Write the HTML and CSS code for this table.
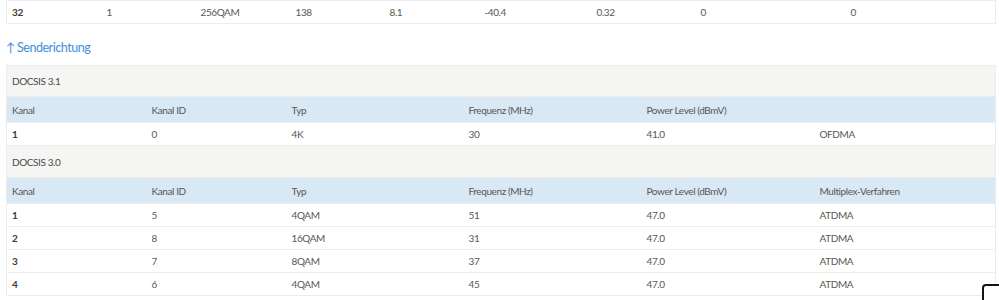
FILE: index.html
```html
<!DOCTYPE html>
<html lang="de">
<head>
<meta charset="utf-8">
<link rel="stylesheet" href="styles.css">
</head>
<body>
<div class="page">
  <table class="tbl tbl-down">
    <colgroup>
      <col class="c95"><col class="c94"><col class="c95"><col class="c94"><col class="c95"><col class="c112"><col class="c104"><col class="c150"><col class="c150">
    </colgroup>
    <tbody>
      <tr class="row">
        <td class="first">32</td><td>1</td><td>256QAM</td><td>138</td><td>8.1</td><td>-40.4</td><td>0.32</td><td>0</td><td>0</td>
      </tr>
    </tbody>
  </table>

  <h3 class="section-link"><span class="arrow">↑</span>Senderichtung</h3>

  <table class="tbl tbl-up">
    <colgroup>
      <col class="w140"><col class="w140"><col class="w177"><col class="w178"><col class="w173"><col class="w181">
    </colgroup>
    <tbody>
      <tr class="group group-first"><td colspan="6">DOCSIS 3.1</td></tr>
      <tr class="head"><td>Kanal</td><td>Kanal ID</td><td>Typ</td><td>Frequenz (MHz)</td><td>Power Level (dBmV)</td><td></td></tr>
      <tr class="row"><td class="first">1</td><td>0</td><td>4K</td><td>30</td><td>41.0</td><td>OFDMA</td></tr>
      <tr class="group"><td colspan="6">DOCSIS 3.0</td></tr>
      <tr class="head"><td>Kanal</td><td>Kanal ID</td><td>Typ</td><td>Frequenz (MHz)</td><td>Power Level (dBmV)</td><td>Multiplex-Verfahren</td></tr>
      <tr class="row"><td class="first">1</td><td>5</td><td>4QAM</td><td>51</td><td>47.0</td><td>ATDMA</td></tr>
      <tr class="row"><td class="first">2</td><td>8</td><td>16QAM</td><td>31</td><td>47.0</td><td>ATDMA</td></tr>
      <tr class="row"><td class="first">3</td><td>7</td><td>8QAM</td><td>37</td><td>47.0</td><td>ATDMA</td></tr>
      <tr class="row"><td class="first">4</td><td>6</td><td>4QAM</td><td>45</td><td>47.0</td><td>ATDMA</td></tr>
    </tbody>
  </table>
</div>
<div class="corner-widget"></div>
</body>
</html>
```

FILE: styles.css
```css
html, body {
  margin: 0;
  padding: 0;
  background: #ffffff;
}
body {
  font-family: Lato, "Open Sans", "Liberation Sans", sans-serif;
  color: #555555;
  overflow: hidden;
}
.page {
  padding: 0 4px 0 6px;
}
.tbl {
  width: 989px;
  border-collapse: collapse;
  table-layout: fixed;
  font-size: 10px;
  letter-spacing: -0.4px;
}
.tbl td {
  padding: 0 5px;
  text-align: left;
  white-space: nowrap;
  border: 1px solid #ececec;
  border-left: 0;
  border-right: 0;
}
.tbl td:first-child { border-left: 1px solid #ececec; }
.tbl td:last-child { border-right: 1px solid #ececec; }

.c95 { width: 95px; }
.c94 { width: 94px; }
.c112 { width: 112px; }
.c104 { width: 104px; }
.c150 { width: 150px; }
.w140 { width: 140px; }
.w177 { width: 177px; }
.w178 { width: 178px; }
.w173 { width: 173px; }
.w181 { width: 181px; }

.row td {
  height: 22px;
  background: #ffffff;
  color: #575757;
}
.row td.first {
  font-weight: 700;
  color: #3a3a3a;
}
.head td {
  height: 25px;
  background: #d8e8f5;
  color: #575757;
  border-top: 0;
  border-bottom: 0;
}
.group td {
  height: 31px;
  background: #f5f5f3;
  color: #4a4a4a;
}
.group-first td {
  height: 30px;
}
.section-link {
  margin: 15px 0 0 0;
  height: 26px;
  font-size: 12.5px;
  font-weight: 400;
  color: #3f8fdb;
  line-height: 17px;
  letter-spacing: -0.45px;
}
.arrow {
  display: inline-block;
  margin-right: 2px;
}
.corner-widget {
  position: fixed;
  left: 982px;
  top: 284px;
  width: 40px;
  height: 40px;
  border: 2px solid #141414;
  border-radius: 4px;
  background: #ffffff;
}
```
